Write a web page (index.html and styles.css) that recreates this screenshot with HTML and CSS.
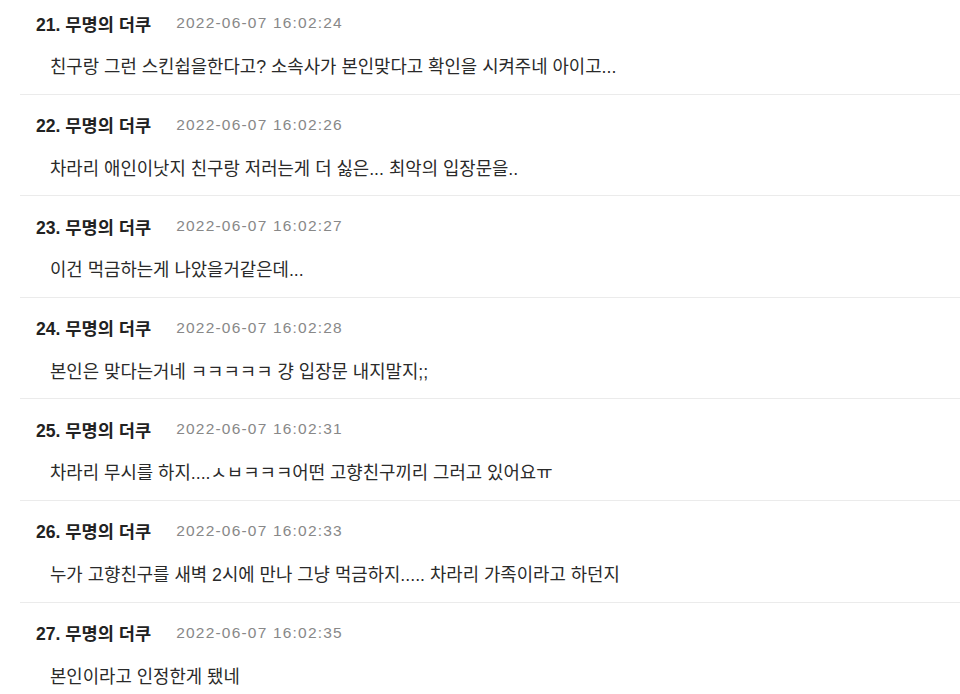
FILE: index.html
```html
<!DOCTYPE html>
<html lang="ko">
<head>
<meta charset="utf-8">
<link rel="stylesheet" href="styles.css">
</head>
<body>
<ul class="comments">
  <li class="comment">
    <div class="meta"><span class="name">21. 무명의 더쿠</span><span class="date">2022-06-07 16:02:24</span></div>
    <p class="text">친구랑 그런 스킨쉽을한다고? 소속사가 본인맞다고 확인을 시켜주네 아이고...</p>
  </li>
  <li class="comment">
    <div class="meta"><span class="name">22. 무명의 더쿠</span><span class="date">2022-06-07 16:02:26</span></div>
    <p class="text">차라리 애인이낫지 친구랑 저러는게 더 싫은... 최악의 입장문을..</p>
  </li>
  <li class="comment">
    <div class="meta"><span class="name">23. 무명의 더쿠</span><span class="date">2022-06-07 16:02:27</span></div>
    <p class="text">이건 먹금하는게 나았을거같은데...</p>
  </li>
  <li class="comment">
    <div class="meta"><span class="name">24. 무명의 더쿠</span><span class="date">2022-06-07 16:02:28</span></div>
    <p class="text">본인은 맞다는거네 ㅋㅋㅋㅋㅋ 걍 입장문 내지말지;;</p>
  </li>
  <li class="comment">
    <div class="meta"><span class="name">25. 무명의 더쿠</span><span class="date">2022-06-07 16:02:31</span></div>
    <p class="text">차라리 무시를 하지....ㅅㅂㅋㅋㅋ어떤 고향친구끼리 그러고 있어요ㅠ</p>
  </li>
  <li class="comment">
    <div class="meta"><span class="name">26. 무명의 더쿠</span><span class="date">2022-06-07 16:02:33</span></div>
    <p class="text">누가 고향친구를 새벽 2시에 만나 그냥 먹금하지..... 차라리 가족이라고 하던지</p>
  </li>
  <li class="comment">
    <div class="meta"><span class="name">27. 무명의 더쿠</span><span class="date">2022-06-07 16:02:35</span></div>
    <p class="text">본인이라고 인정한게 됐네</p>
  </li>
</ul>
</body>
</html>
```
FILE: styles.css
```css
html, body {
  margin: 0;
  padding: 0;
  background: #fff;
}
body {
  font-family: "Liberation Sans", "Noto Sans CJK KR", sans-serif;
  color: #222;
  overflow: hidden;
}
.comments {
  list-style: none;
  margin: -7px 0 0 20px;
  padding: 0;
}
.comment {
  padding: 18px 0 14.6px 16px;
  border-bottom: 1px solid #ebebeb;
}
.meta {
  display: flex;
  align-items: center;
  height: 24px;
}
.name {
  font-size: 17.6px;
  font-weight: 700;
  color: #222;
}
.date {
  margin-left: 25px;
  font-size: 15.5px;
  letter-spacing: 1.2px;
  color: #888;
}
.text {
  margin: 20px 0 0 14px;
  font-size: 17.8px;
  line-height: 24px;
  color: #2a2a2a;
}
```
